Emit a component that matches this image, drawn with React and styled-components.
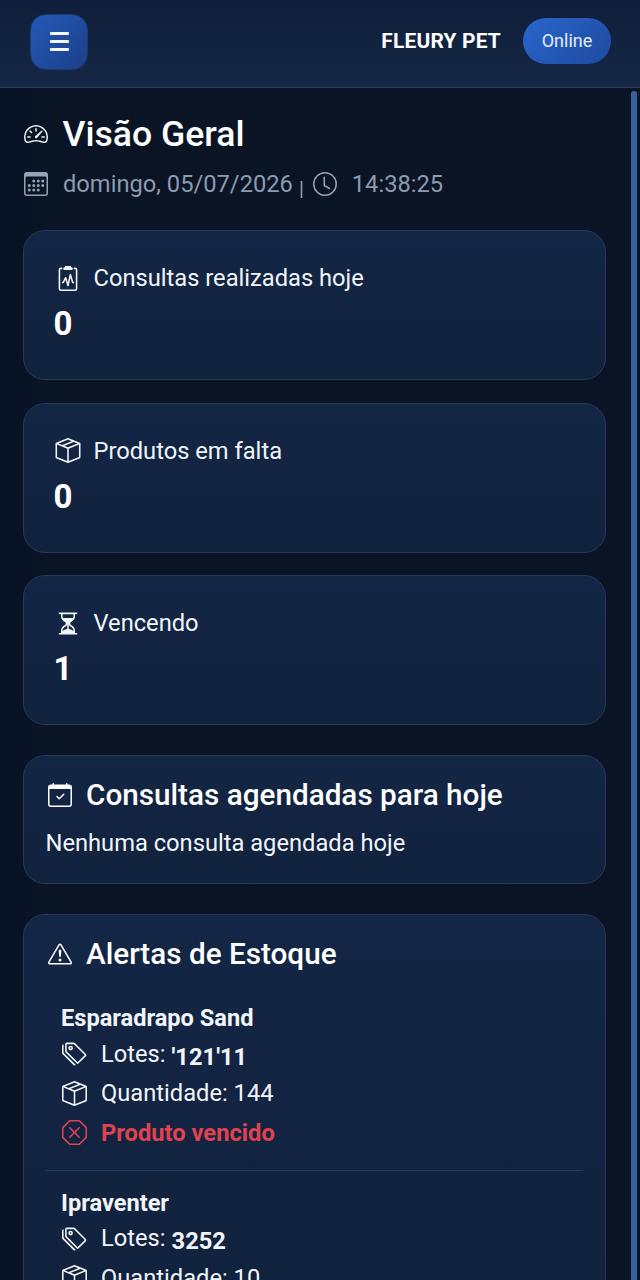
import React from 'react';
import styled, { createGlobalStyle } from 'styled-components';
import {
  BsSpeedometer2, BsCalendar3, BsClock, BsClipboard2Pulse, BsBoxSeam, BsHourglassSplit,
  BsCalendarCheck, BsExclamationTriangle, BsTags, BsXOctagon,
} from 'react-icons/bs';

const Global = createGlobalStyle`
  html, body { margin: 0; padding: 0; height: 1280px; overflow: hidden; background: #0a1424; }
  * { box-sizing: border-box; }
  body { font-family: Roboto, "Liberation Sans", sans-serif; color: #f1f5f9; }
`;

const Page = styled.div`
  width: 640px; height: 1280px; display: flex; flex-direction: column; overflow: hidden;
`;
const Header = styled.header`
  flex: none; height: 88px; display: flex; align-items: center; justify-content: space-between;
  padding: 0 29px 6px 30px;
  background: linear-gradient(180deg, #0f1e3a 0%, #152845 100%);
  border-bottom: 1px solid #2a3d5c;
`;
const MenuButton = styled.button`
  width: 58px; height: 56px; margin-top: 2px; border: 1px solid #1e3a6e; border-radius: 16px; padding: 0;
  display: flex; align-items: center; justify-content: center;
  background: linear-gradient(135deg, #2459b8 0%, #1c3f88 100%);
`;
const Burger = styled.span`
  display: flex; flex-direction: column; gap: 5px; width: 19px;
  & > i { display: block; height: 3px; background: #f4f7fb; border-radius: 1px; }
`;
const HeaderRight = styled.div`display: flex; align-items: center; gap: 22px;`;
const Brand = styled.span`font-size: 20.9px; font-weight: 700; color: #fff; letter-spacing: .2px;`;
const Status = styled.span`
  width: 88px; height: 46px; border-radius: 23px; display: flex; align-items: center; justify-content: center;
  font-size: 18px; color: #e4ecfa; background: linear-gradient(135deg, #2a66cc 0%, #1d4aa0 100%);
`;
const Body = styled.div`
  flex: 1; min-height: 0; display: flex;
  background: linear-gradient(90deg, #071426 0%, #0a1424 10%, #0a1424 100%);
`;
const Main = styled.main`
  flex: 1; min-width: 0; padding: 27px 25px 0 23px; overflow: hidden;
`;
const ScrollTrack = styled.div`flex: none; width: 9px; padding: 3px 3px 0 0;`;
const ScrollThumb = styled.div`height: 100%; border-radius: 3px 3px 0 0; background: #38609a;`;

const Title = styled.h1`
  margin: 0; display: flex; align-items: center; gap: 14.5px; font-size: 35.6px; line-height: 38px; font-weight: 500; color: #fff;
  svg { font-size: 24px; margin-left: 1px; color: #e8edf5; flex: none; }
`;
const DateRow = styled.div`
  margin-top: 14px; display: flex; align-items: center; font-size: 23.7px; line-height: 34px; color: #8b9bb0;
  svg { font-size: 24px; flex: none; color: #94a3b8; }
`;
const DateText = styled.span`margin-left: 15px;`;
const Pipe = styled.span`margin: 10px 9px 0 6px; color: #94a3b8; font-size: 20px; line-height: 24px;`;
const FirstIcon = styled.span`display: flex; margin-left: 1px;`;
const TimeText = styled.span`margin-left: 15px;`;

const Stack = styled.div`margin-top: 29px; display: flex; flex-direction: column; gap: 22.5px;`;
const Card = styled.section`
  border: 1px solid #253a5a; border-radius: 22px;
  background: linear-gradient(180deg, #132645 0%, #11223d 100%);
`;
const StatCard = styled(Card)`height: 150px; padding: 31px 29.5px 0;`;
const StatLabel = styled.div`
  display: flex; align-items: center; font-size: 23.7px; line-height: 32px; color: #f1f5f9;
  svg { font-size: 25px; width: 28px; flex: none; margin-right: 12px; }
`;
const StatValue = styled.div`font-size: 33px; line-height: 40px; font-weight: 700; color: #fff; margin-top: 10px;`;
const PanelCard = styled(Card)`
  margin-top: ${p => p.$gap}px; ${p => p.$h && `height: ${p.$h}px;`} padding: 20px 22px 0 21px;
`;
const PanelTitle = styled.h2`
  margin: 0; display: flex; align-items: center; font-size: 29.7px; line-height: 38px; font-weight: 500; color: #fff;
  svg { font-size: 24px; flex: none; margin: 0 14px 0 3px; }
`;
const PanelText = styled.p`margin: 13px 0 0 .5px; font-size: 23.7px; line-height: 32px; color: #f1f5f9;`;
const AlertList = styled.div`margin-top: 15px;`;
const Alert = styled.div`
  padding: 14px 16px 17px;
  & + & { border-top: 1px solid #263a58; padding-top: 16px; }
`;
const AlertName = styled.div`font-size: 23.6px; line-height: 32px; font-weight: 700; color: #f1f5f9;`;
const AlertLine = styled.div`
  display: flex; align-items: center; height: 39.5px; font-size: 23.7px; color: ${p => p.$danger ? '#e0424f' : '#f1f5f9'};
  font-weight: ${p => p.$danger ? 700 : 400};
  svg { font-size: 25px; flex: none; margin: 0 14px 0 1px; }
`;
const Strong = styled.strong`margin-left: 6px; position: relative; top: 3px; font-weight: 700;`;

function Stat({ icon, label, value }) {
  return (
    <StatCard>
      <StatLabel>{icon}{label}</StatLabel>
      <StatValue>{value}</StatValue>
    </StatCard>
  );
}

function AlertItem({ name, lote, qty, danger }) {
  return (
    <Alert>
      <AlertName>{name}</AlertName>
      <AlertLine><BsTags />Lotes:<Strong>{lote}</Strong></AlertLine>
      <AlertLine><BsBoxSeam />Quantidade: {qty}</AlertLine>
      {danger && <AlertLine $danger><BsXOctagon />{danger}</AlertLine>}
    </Alert>
  );
}

export default function App() {
  return (
    <Page>
      <Global />
      <Header>
        <MenuButton aria-label="Menu"><Burger><i /><i /><i /></Burger></MenuButton>
        <HeaderRight>
          <Brand>FLEURY PET</Brand>
          <Status>Online</Status>
        </HeaderRight>
      </Header>
      <Body>
        <Main>
          <Title><BsSpeedometer2 />Visão Geral</Title>
          <DateRow>
            <FirstIcon><BsCalendar3 /></FirstIcon><DateText>domingo, 05/07/2026</DateText><Pipe>|</Pipe><BsClock /><TimeText>14:38:25</TimeText>
          </DateRow>
          <Stack>
            <Stat icon={<BsClipboard2Pulse />} label="Consultas realizadas hoje" value="0" />
            <Stat icon={<BsBoxSeam />} label="Produtos em falta" value="0" />
            <Stat icon={<BsHourglassSplit />} label="Vencendo" value="1" />
            <PanelCard $gap={7.5} $h={129}>
              <PanelTitle><BsCalendarCheck />Consultas agendadas para hoje</PanelTitle>
              <PanelText>Nenhuma consulta agendada hoje</PanelText>
            </PanelCard>
            <PanelCard $gap={7.5}>
              <PanelTitle><BsExclamationTriangle />Alertas de Estoque</PanelTitle>
              <AlertList>
                <AlertItem name="Esparadrapo Sand" lote="'121'11" qty="144" danger="Produto vencido" />
                <AlertItem name="Ipraventer" lote="3252" qty="10" />
              </AlertList>
            </PanelCard>
          </Stack>
        </Main>
        <ScrollTrack><ScrollThumb /></ScrollTrack>
      </Body>
    </Page>
  );
}
